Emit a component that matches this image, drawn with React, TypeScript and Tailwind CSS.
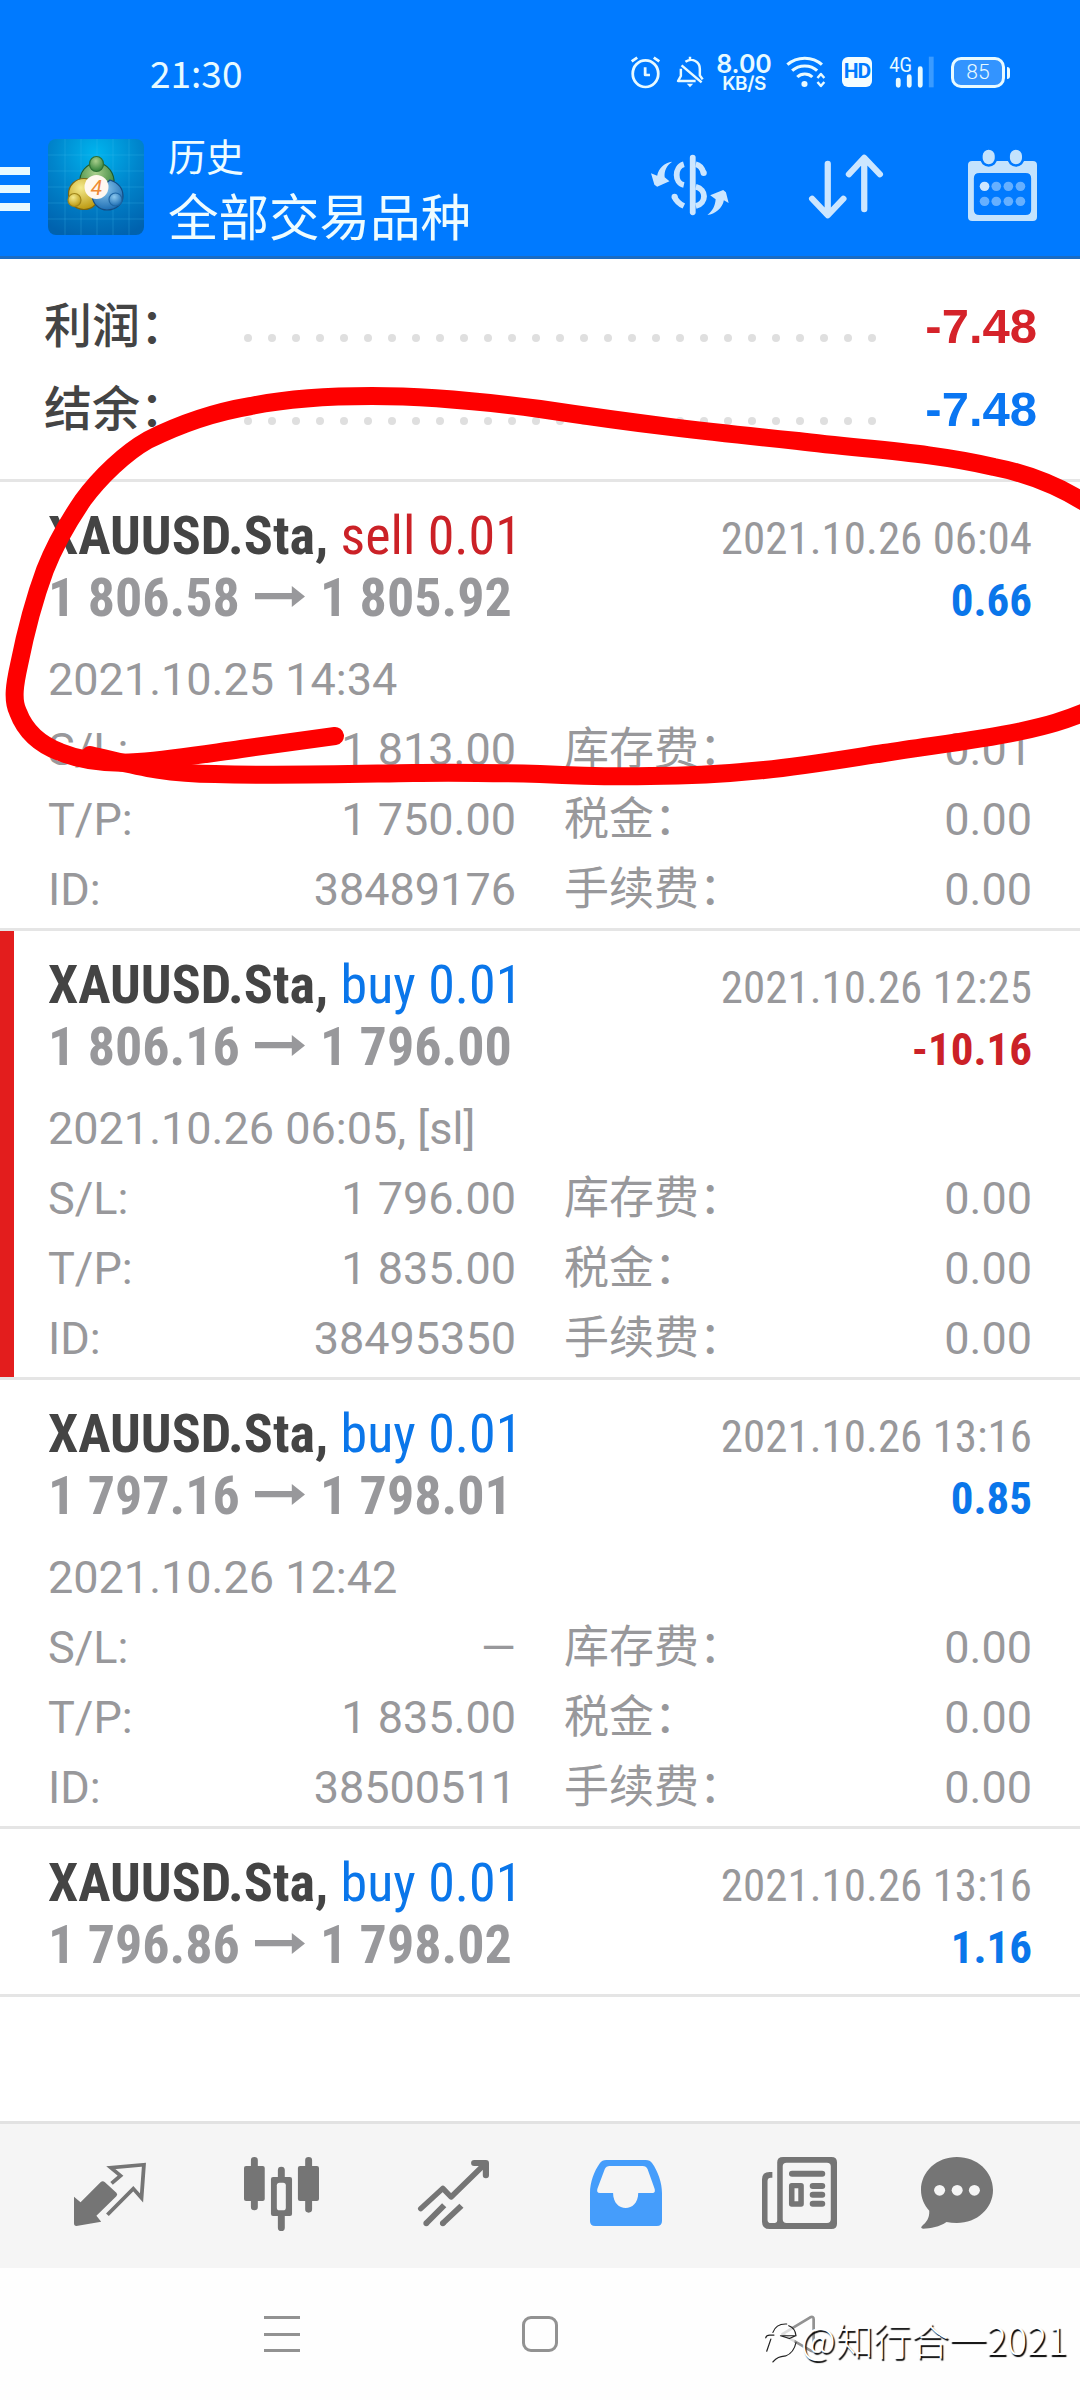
import React from "react";
import clsx from "clsx";

interface Trade {
	id: string;
	side: "sell" | "buy";
	open: string;
	close: string;
	openedAt: string;
	closedAt: string;
	profit: string;
	sl?: string;
	tp?: string;
	swap?: string;
	stopped?: boolean;
	collapsed?: boolean;
}

const trades: Trade[] = [
	{
		id: "38489176",
		side: "sell",
		open: "1 806.58",
		close: "1 805.92",
		openedAt: "2021.10.25 14:34",
		closedAt: "2021.10.26 06:04",
		profit: "0.66",
		sl: "1 813.00",
		tp: "1 750.00",
		swap: "0.01",
	},
	{
		id: "38495350",
		side: "buy",
		open: "1 806.16",
		close: "1 796.00",
		openedAt: "2021.10.26 06:05, [sl]",
		closedAt: "2021.10.26 12:25",
		profit: "-10.16",
		sl: "1 796.00",
		tp: "1 835.00",
		stopped: true,
	},
	{
		id: "38500511",
		side: "buy",
		open: "1 797.16",
		close: "1 798.01",
		openedAt: "2021.10.26 12:42",
		closedAt: "2021.10.26 13:16",
		profit: "0.85",
		tp: "1 835.00",
	},
	{
		id: "38500102",
		side: "buy",
		open: "1 796.86",
		close: "1 798.02",
		openedAt: "",
		closedAt: "2021.10.26 13:16",
		profit: "1.16",
		collapsed: true,
	},
];

interface DrawingProps {
	box: string;
	className: string;
	children: React.ReactNode;
}

const Drawing: React.FC<DrawingProps> = ({box, className, children}) => (
	<svg
		viewBox={box}
		preserveAspectRatio="none"
		className={clsx("block shrink-0 overflow-visible", className)}
		fill="none"
		stroke="none"
		strokeLinecap="round"
		strokeLinejoin="round"
	>
		{children}
	</svg>
);

const StatusBar: React.FC = () => (
	<div className="flex h-[130px] items-start pt-14 text-[#e8faff]">
		<span className="ml-[150px] w-[481px] font-['Noto_Sans_CJK_SC',sans-serif] text-[37px] leading-8">
			21:30
		</span>

		<Drawing box="266 168 84 96" className="h-8 w-[29px]">
			<ellipse cx="308" cy="221" rx="37" ry="40" stroke="currentColor" strokeWidth="8" />
			<path d="M307 202v23h14M268 184l16-11M348 184l-16-11" stroke="currentColor" strokeWidth="8" strokeLinecap="butt" />
		</Drawing>

		<Drawing box="400 168 74 96" className="ml-[17px] h-8 w-[26px]">
			<path
				d="M413 196l57 51M411 206v22l-8 15h50M424 185c20-13 41 0 41 22v19l8 12M437 170v8"
				stroke="currentColor"
				strokeWidth="7"
				strokeLinecap="butt"
			/>
			<path d="M428 251h18l-9 11z" fill="currentColor" />
		</Drawing>

		<div className="-mt-0.5 ml-[15px] flex w-[52px] flex-col items-center font-['Inter',sans-serif] leading-none">
			<span className="text-[25px] leading-5 font-semibold">8.00</span>
			<span className="text-[19px] leading-[19px] font-semibold tracking-tight">KB/S</span>
		</div>

		<Drawing box="718 168 114 96" className="ml-4 h-8 w-[39px]">
			<path d="M722 194c28-26 74-26 101 0M736 212c20-19 54-19 73 0M751 231c12-12 32-12 44 0" stroke="currentColor" strokeWidth="9" strokeLinecap="butt" />
			<circle cx="772" cy="252" r="9" fill="currentColor" />
			<path d="M810 234l10-12 10 12M810 246l10 12 10-12" stroke="currentColor" strokeWidth="7" strokeLinecap="butt" />
		</Drawing>

		<div className="mt-px ml-[17px] flex h-[30px] w-[30px] items-center justify-center rounded-md bg-[#f4fdff] font-['Roboto',sans-serif] text-[21px] font-bold tracking-tighter text-[#007aff]">
			HD
		</div>

		<Drawing box="1020 168 128 96" className="ml-[18px] h-8 w-11">
			<text
				x="1018"
				y="216"
				fill="currentColor"
				fontSize="58"
				textLength="66"
				lengthAdjust="spacingAndGlyphs"
				className="font-['Roboto',sans-serif]"
			>
				4G
			</text>
			<path d="M1044 240v16M1076 230v26M1108 206v50" stroke="currentColor" strokeWidth="14" />
			<path d="M1140 170v92" stroke="#3a9bff" strokeWidth="14" strokeLinecap="butt" />
		</Drawing>

		<div className="mt-px ml-[17px] flex items-center">
			<div className="flex h-[31px] w-[54px] items-center justify-center rounded-[10px] border-[3px] border-[#e8faff] bg-[#3394ff] font-['Roboto',sans-serif] text-[21px] font-light">
				85
			</div>
			<div className="ml-0.5 h-3 w-[3px] rounded-r bg-[#e8faff]" />
		</div>
	</div>
);

const AppLogo: React.FC = () => (
	<svg viewBox="0 0 96 96" className="block size-24 shrink-0">
		<defs>
			<radialGradient id="sky" cx="0.5" cy="0.15" r="0.9">
				<stop offset="0" stopColor="#00b4ee" />
				<stop offset="0.5" stopColor="#0085cc" />
				<stop offset="1" stopColor="#0062ae" />
			</radialGradient>
			<radialGradient id="green" cx="0.45" cy="0.3" r="0.7">
				<stop offset="0" stopColor="#a9cf8c" />
				<stop offset="1" stopColor="#2f7f37" />
			</radialGradient>
			<radialGradient id="yellow" cx="0.4" cy="0.3" r="0.7">
				<stop offset="0" stopColor="#f4ea8c" />
				<stop offset="1" stopColor="#bd9a12" />
			</radialGradient>
			<radialGradient id="blue" cx="0.4" cy="0.3" r="0.7">
				<stop offset="0" stopColor="#8cc8ee" />
				<stop offset="1" stopColor="#1f6fb4" />
			</radialGradient>
		</defs>
		<rect width="96" height="96" rx="8" fill="url(#sky)" />
		<path
			d="M17 0v96M33 0v96M49 0v96M65 0v96M81 0v96M0 16h96M0 32h96M0 48h96M0 64h96M0 80h96"
			stroke="#3fc0ee"
			strokeOpacity="0.25"
			strokeWidth="1"
		/>
		<g strokeWidth="1.2">
			<path d="M32 44c-1-10 6-20 17-20s18 11 17 21l-6 12-12-12z" fill="url(#green)" stroke="#1d5a2c" />
			<circle cx="36" cy="55" r="15.5" fill="url(#yellow)" stroke="#7a6613" />
			<path d="M44 57l18-16c9 3 13 9 13 16 0 8-7 14-16 14-8 0-14-6-15-14z" fill="url(#blue)" stroke="#154c82" />
			<ellipse cx="48.5" cy="25" rx="7" ry="7.5" fill="url(#green)" stroke="#2c6e33" />
			<circle cx="26.500" cy="61" r="6.500" fill="url(#yellow)" stroke="#a0851a" />
			<circle cx="67.500" cy="60.500" r="6.500" fill="url(#blue)" stroke="#2067a4" />
		</g>
		<circle cx="48.500" cy="48" r="12" fill="#fff8f0" />
		<text
			x="48.500"
			y="55.500"
			textAnchor="middle"
			fontSize="21"
			fill="#ee8a35"
			className="font-['Roboto',sans-serif] italic"
		>
			4
		</text>
	</svg>
);

const AppBar: React.FC = () => (
	<div className="flex h-[126px] items-start">
		<div className="mt-[37px] flex w-[30px] flex-col gap-[10px]">
			<div className="h-2 bg-[#e8faff]" />
			<div className="h-2 bg-[#e8faff]" />
			<div className="h-2 bg-[#e8faff]" />
		</div>

		<div className="mt-[9px] ml-[18px]">
			<AppLogo />
		</div>

		<div className="ml-6 w-[483px] font-['Noto_Sans_CJK_SC',sans-serif] text-[#eefcff]">
			<div className="text-[38px] leading-[50px]">历史</div>
			<div className="text-[50.5px] leading-[69px]">全部交易品种</div>
		</div>

		<Drawing box="322 450 228 210" className="mt-5 h-[70px] w-[78px] text-[#cce6ff]">
			<path d="M444 473v164" stroke="currentColor" strokeWidth="17" />
			<path
				d="M418 493c-28 8-28 56 0 62M453 493c10 2 18 10 23 26M390 590c6 14 15 22 28 28M453 560c32 8 32 50 0 58"
				stroke="currentColor"
				strokeWidth="17"
				strokeLinecap="butt"
			/>
			<circle cx="476" cy="519" r="9" fill="currentColor" />
			<circle cx="391" cy="590" r="9" fill="currentColor" />
			<path d="M384 485c-22 2-40 20-44 42l-18-7 10 34 8 6 36-16-14-12c-2-20 6-36 22-47zM487 645c22-2 44-20 48-44l14 8-8-32-8-7-38 16 16 12c-2 20-8 34-24 47z" fill="currentColor" />
		</Drawing>

		<Drawing box="782 450 213 210" className="ml-20 mt-5 h-[70px] w-[74px] text-[#cce6ff]">
			<path d="M836 491v154M791 596l45 50 45-50M941 628V474M897 523l44-50 45 50" stroke="currentColor" strokeWidth="18" />
		</Drawing>

		<Drawing box="1243 450 200 210" className="ml-[85px] mt-5 h-[70px] w-[69px] text-[#c4e3fd]">
			<path
				fillRule="evenodd"
				d="M1255 483h176q12 0 12 12v156q0 12-12 12h-176q-12 0-12-12V495q0-12 12-12zM1276 519q-16 0-16 16v94q0 16 16 16h134q16 0 16-16v-94q0-16-16-16z"
				fill="currentColor"
			/>
			<path d="M1303 465v10M1382 465v10" stroke="#007aff" strokeWidth="50" />
			<path d="M1303 467v8M1382 467v8" stroke="currentColor" strokeWidth="35" />
			{[1291, 1325, 1360, 1395].map((x, idx) => (
				<g key={x} fill="#66b0ff">
					<circle cx={x} cy="559" r="14" fill={idx === 0 ? "#cce6ff" : "#66b0ff"} />
					<circle cx={x} cy="604" r="14" />
				</g>
			))}
		</Drawing>
	</div>
);

interface SummaryRowProps {
	label: string;
	value: string;
	className: string;
}

const SummaryRow: React.FC<SummaryRowProps> = ({label, value, className}) => (
	<div className="flex h-[83px] items-start font-['Roboto','Noto_Sans_CJK_SC',sans-serif] text-[48px] leading-[83px]">
		<span className="w-[200px] font-medium text-[#444]">{label}</span>
		<div className="mt-[49px] flex w-[632px] justify-between">
			{Array.from({length: 27}, (_, idx) => (
				<span key={idx} className="size-2 rounded-full bg-[#dfdfdf]" />
			))}
		</div>
		<span
			className={clsx(
				"flex-1 text-right font-['Liberation_Sans',sans-serif] text-[49px] font-bold",
				className,
			)}
		>
			{value}
		</span>
	</div>
);

const Cell: React.FC<{label: string; value: string}> = ({label, value}) => (
	<div className="flex justify-between">
		<span>{label}</span>
		<span>{value}</span>
	</div>
);

const TradeItem: React.FC<{trade: Trade}> = ({trade}) => {
	const loss = trade.profit.startsWith("-");

	return (
		<div
			className={clsx(
				"flex border-b-[3px] border-[#e5e5e5] font-['Roboto','Noto_Sans_CJK_SC',sans-serif] text-[#98989b]",
				trade.collapsed ? "h-[168px]" : "h-[449px]",
			)}
		>
			<div className={clsx("w-[14px] shrink-0", trade.stopped && "bg-[#e31d1d]")} />

			<div className="flex-1 pt-6 pr-12 pl-[34px]">
				<div className="flex items-baseline justify-between font-stretch-75%">
					<div className="text-[54px] leading-[59px] whitespace-nowrap">
						<span className="font-bold text-[#444]">XAUUSD.Sta,</span>{" "}
						<span className={trade.side === "sell" ? "text-[#cb2127]" : "text-[#0a76ea]"}>
							{trade.side} 0.01
						</span>
					</div>
					<div className="text-[45px] leading-[59px]">{trade.closedAt}</div>
				</div>

				<div className="flex items-baseline justify-between font-bold font-stretch-75%">
					<div className="flex text-[54px] leading-[59px]">
						<span>{trade.open}</span>
						<Drawing box="711 39 144 62" className="mx-[15px] mt-[18px] h-[21px] w-[50px]">
							<path d="M711 60h106V39l38 31-38 31V78H711z" fill="#98989b" />
						</Drawing>
						<span>{trade.close}</span>
					</div>
					<div
						className={clsx(
							"text-[45px] leading-[59px]",
							loss ? "text-[#cb2127]" : "text-[#0a76ea]",
						)}
					>
						{trade.profit}
					</div>
				</div>

				{!trade.collapsed && (
					<div className="mt-[15px] text-[45px] leading-[70px]">
						<div>{trade.openedAt}</div>
						<div className="flex gap-12">
							<div className="w-[468px]">
								<Cell label="S/L:" value={trade.sl ?? "—"} />
								<Cell label="T/P:" value={trade.tp ?? "—"} />
								<Cell label="ID:" value={trade.id} />
							</div>
							<div className="flex-1">
								<Cell label="库存费：" value={trade.swap ?? "0.00"} />
								<Cell label="税金：" value="0.00" />
								<Cell label="手续费：" value="0.00" />
							</div>
						</div>
					</div>
				)}
			</div>
		</div>
	);
};

const TabBar: React.FC = () => (
	<div className="flex h-[147px] items-start border-t-[3px] border-[#e2e2e2] bg-[#f5f5f5] pt-[33px] pl-[74px] text-[#757575]">
		<Drawing box="216 171 209 222" className="h-[74px] w-[72px]">
			<path d="M216 290l19 17 58-60q6-6 12-1l34 32q5 5 0 11l-58 58 14 18-72 13q-7 0-7-8z" fill="currentColor" />
			<path
				d="M325 250l26-23-28-24 96-9-7 100-24-28-75 78"
				stroke="currentColor"
				strokeWidth="11"
				strokeLinecap="butt"
				strokeLinejoin="miter"
			/>
		</Drawing>

		<Drawing box="709 171 217 222" className="ml-[98px] h-[74px] w-[75px]">
			<path d="M739 181v140M896 181v147M817 210v30M817 345v38" stroke="currentColor" strokeWidth="20" />
			<rect x="709" y="198" width="60" height="105" rx="6" fill="currentColor" />
			<rect x="865" y="198" width="61" height="105" rx="6" fill="currentColor" />
			<rect x="787" y="231" width="61" height="117" rx="6" fill="currentColor" />
			<rect x="804" y="248" width="26" height="83" rx="8" fill="#f5f5f5" />
		</Drawing>

		<Drawing box="1214 171 206 222" className="ml-[99px] h-[74px] w-[71px]">
			<path d="M1222 326l64-61 24 26 98-99" stroke="currentColor" strokeWidth="16" />
			<path d="M1377 189h34v37" stroke="currentColor" strokeWidth="18" />
			<path d="M1238 370l52-54M1286 370l54-53" stroke="currentColor" strokeWidth="17" strokeLinecap="butt" />
			<path d="M1238 370h.1M1286 370h.1" stroke="currentColor" strokeWidth="17" />
		</Drawing>

		<Drawing box="147 171 209 222" className="ml-[101px] h-[74px] w-[72px]">
			<path
				fillRule="evenodd"
				d="M194 180h115q12 0 18 9c18 26 29 60 29 90v84q0 15-15 15H162q-15 0-15-15v-84c0-32 12-66 29-90q6-9 18-9zM204 198q-10 0-14 9l-21 58q-5 14 7 14h38c0 60 73 60 73 0h41q11 0 6-14l-20-58q-4-9-14-9z"
				fill="#459dfb"
			/>
		</Drawing>

		<Drawing box="647 171 217 222" className="ml-[100px] h-[74px] w-[75px]">
			<path
				fillRule="evenodd"
				d="M708 171h140q16 0 16 16v184q0 16-16 16H669q-22 0-22-22V238q0-22 22-22h8v17h-4q-10 0-10 10v116q0 10 10 10h10q8 0 8-8V187q0-16 17-16zM718 188q-11 0-11 11v159q0 11 11 11h117q11 0 11-11V199q0-11-11-11z"
				fill="currentColor"
			/>
			<path d="M734 221h87M794 258h27M794 284h27M794 311h27" stroke="currentColor" strokeWidth="18" />
			<rect x="733" y="257" width="27" height="55" stroke="currentColor" strokeWidth="16" />
		</Drawing>

		<Drawing box="1109 171 209 222" className="ml-[84px] h-[74px] w-[72px]">
			<path d="M1213 171c59 0 105 44 105 99s-46 99-105 99q-16 0-30-3c-20 14-46 20-68 20q-9-1-3-8c12-12 22-22 21-46-15-17-24-38-24-62 0-55 46-99 104-99z" fill="currentColor" />
			<circle cx="1163" cy="271" r="16" fill="#f5f5f5" />
			<circle cx="1214" cy="271" r="16" fill="#f5f5f5" />
			<circle cx="1264" cy="271" r="16" fill="#f5f5f5" />
		</Drawing>
	</div>
);

const SystemNav: React.FC = () => (
	<div className="relative flex h-[132px] items-start bg-[#fefefe] pt-12">
		<div className="ml-[264px] flex w-9 flex-col gap-[13.500px]">
			<div className="h-[3px] bg-[#929292]" />
			<div className="h-[3px] bg-[#929292]" />
			<div className="h-[3px] bg-[#929292]" />
		</div>
		<div className="ml-[222px] size-9 rounded-[9px] border-[3px] border-[#929292]" />
		<Drawing box="700 648 100 110" className="ml-[223px] h-[37px] w-[34px]">
			<path d="M704 702l82-50q10-4 10 6v88q0 10-10 4z" stroke="#929292" strokeWidth="8" />
		</Drawing>

		<div className="absolute top-[43px] left-[765px] flex items-center">
			<Drawing box="655 660 90 140" className="mt-2 h-[47px] w-[31px]">
				<path
					d="M660 755c6-24 6-34 14-46h-18c20-48 56-44 66-30 24-2 28 60 4 72-16 30-36 10-48 36"
					fill="#fefefe"
					fillOpacity="0.7"
				/>
				<path
					d="M657 716q2-8 12-8h12M678 700c6-18 22-26 40-25M724 680c16 6 20 18 21 30M660 756l12-36M745 730c-4 20-14 34-30 40-18 2-26 4-37 18M700 710h44l-18 8z"
					stroke="#222"
					strokeWidth="3.500"
				/>
			</Drawing>
			<span className="ml-[5px] font-['Noto_Sans_CJK_SC',sans-serif] text-[38px] leading-[48px] font-light tracking-[-0.200px] whitespace-nowrap text-white [text-shadow:1.500px_1.500px_1px_#000]">
				@知行合一2021
			</span>
		</div>
	</div>
);

// Freehand marker circle around the first deal
const Marker: React.FC = () => (
	<svg
		viewBox="0 0 1080 2400"
		className="pointer-events-none absolute top-0 left-0 h-[2400px] w-[1080px]"
		fill="none"
		stroke="#fe0000"
		strokeWidth="18"
		strokeLinecap="round"
		strokeLinejoin="round"
	>
		<path d="M1092 507C1060 486 1025 473 994 467C930 452 870 450 798 441C700 431 640 424 540 409C480 401 430 396 372 396C330 396 290 398 251 406C215 412 180 424 148 440C125 453 100 477 83 500C66 525 54 547 45 570C32 605 25 635 19 665C15 683 12 700 18 712C24 728 36 743 60 752C82 761 110 764 138 762C175 759 205 754 241 749L335 736" />
		<path d="M90 755C130 764 160 774 215 774C280 776 350 774 413 773C460 772 500 773 540 774C580 776 610 777 650 776C690 776 725 774 764 770C805 766 845 759 884 753C935 745 980 740 1022 731C1045 726 1065 721 1092 709" />
	</svg>
);

export default function App() {
	return (
		<div className="relative flex h-[2400px] w-[1080px] flex-col overflow-hidden bg-white">
			<header className="border-b-[3px] border-[#1a6cc4] bg-[#007aff]">
				<StatusBar />
				<AppBar />
			</header>

			<section className="h-[223px] border-b-[3px] border-[#e5e5e5] pt-[26px] pr-[43px] pl-11">
				<SummaryRow label="利润：" value="-7.48" className="text-[#d5232a]" />
				<SummaryRow label="结余：" value="-7.48" className="text-[#0a76f2]" />
			</section>

			<main className="flex-1">
				{trades.map((trade) => (
					<TradeItem key={trade.id} trade={trade} />
				))}
			</main>

			<TabBar />
			<SystemNav />
			<Marker />
		</div>
	);
}
